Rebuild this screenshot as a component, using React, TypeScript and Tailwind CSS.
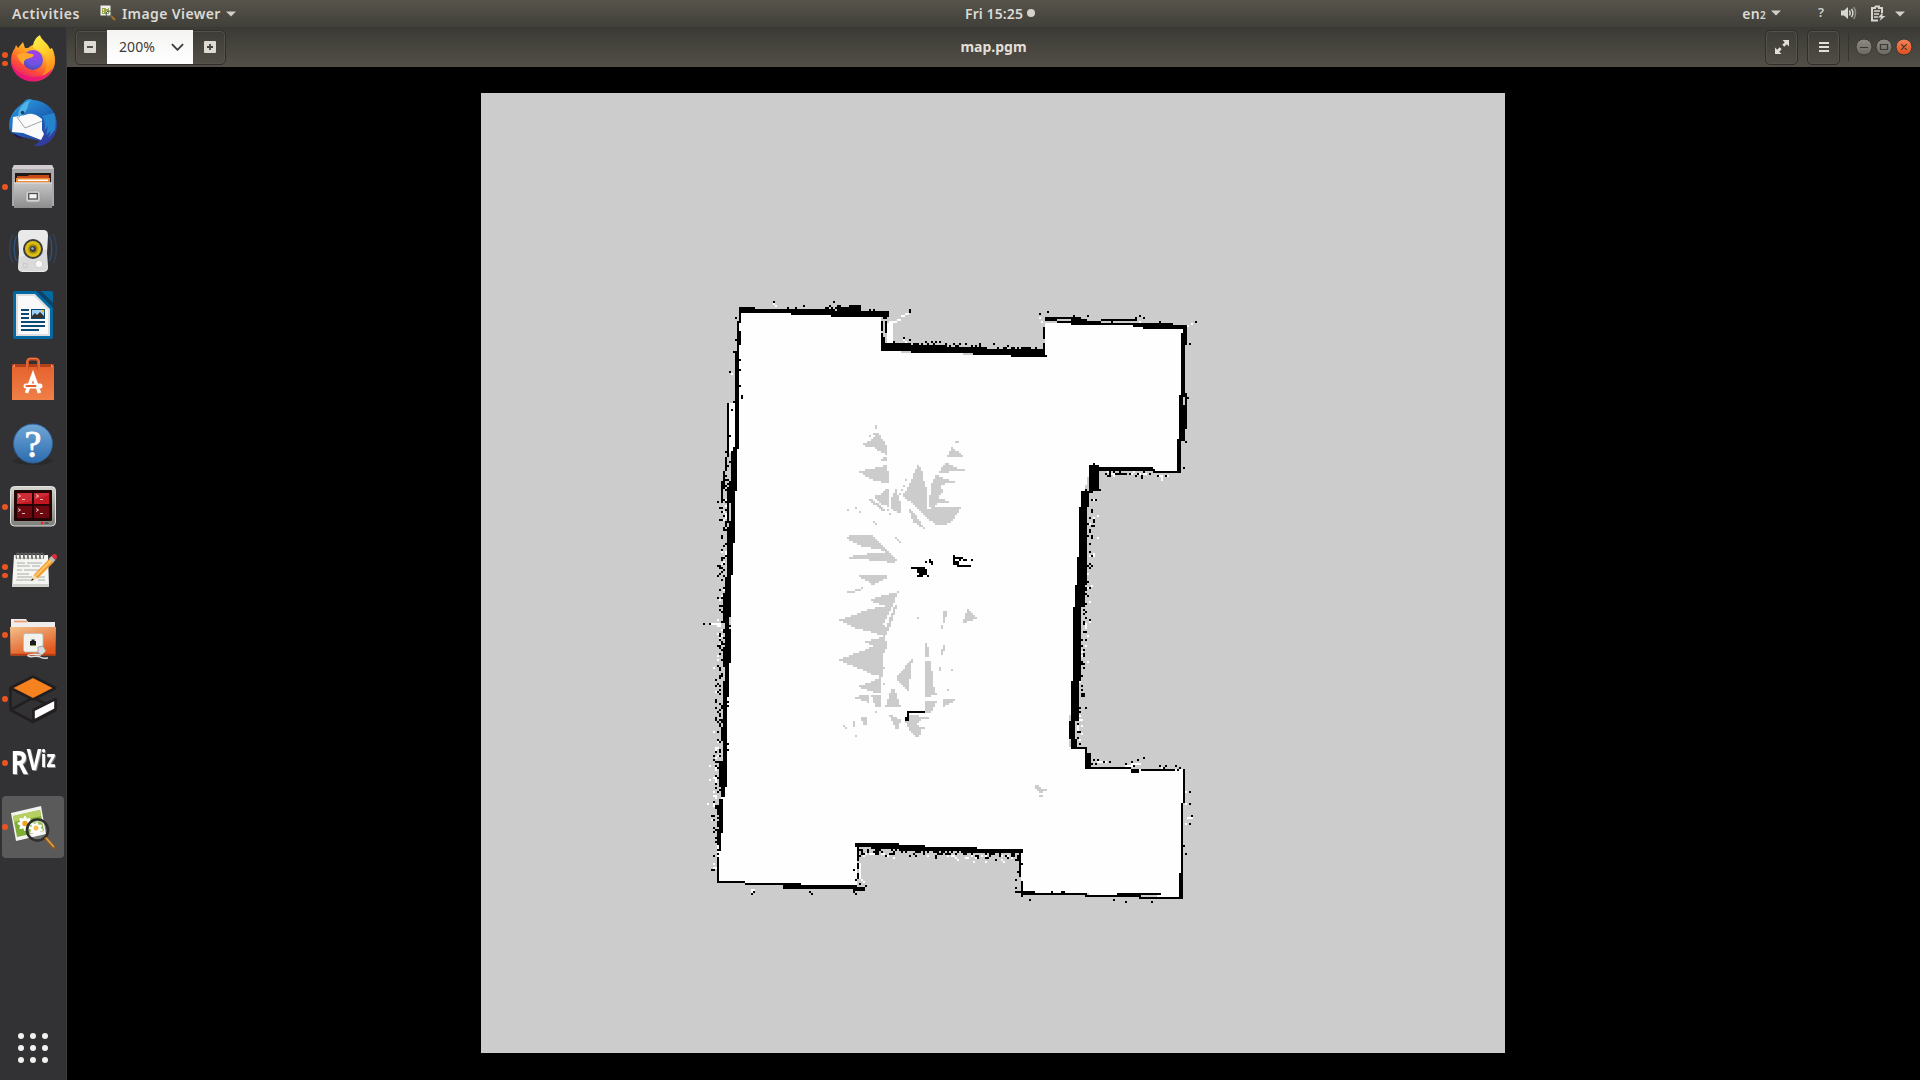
import React from "react";

/* ---------- occupancy map ---------- */

type Pt = [number, number];
const X0 = 481;
const Y0 = 93;

const pts = (s: string): Pt[] => s.trim().split(/\s+/).map((p) => p.split(",").map(Number) as Pt);

/** Scan-converts polygons to 2px map cells; coordinates are thirds of a pixel from (ox, oy). */
function fillCells(ox: number, oy: number, polys: string[]): string {
  let d = "";
  for (const s of polys) {
    const p = pts(s).map(([x, y]) => [(ox + x / 3 - X0) / 2, (oy + y / 3 - Y0) / 2] as Pt);
    const ys = p.map((q) => q[1]);
    for (let r = Math.floor(Math.min(...ys)); r <= Math.ceil(Math.max(...ys)); r++) {
      const c = r + 0.5;
      const xs: number[] = [];
      p.forEach((a, i) => {
        const b = p[(i + 1) % p.length];
        if (a[1] <= c !== b[1] <= c) xs.push(a[0] + ((c - a[1]) / (b[1] - a[1])) * (b[0] - a[0]));
      });
      xs.sort((m, n) => m - n);
      for (let i = 0; i + 1 < xs.length; i += 2) {
        const l = Math.round(xs[i]);
        const w = Math.round(xs[i + 1]) - l;
        if (w > 0) d += `M${l} ${r}h${w}v1h${-w}z`;
      }
    }
  }
  return d;
}

/** Rectangles "x,y,w,h" (or single cells "x,y" given by centre) snapped to map cells. */
function boxCells(ox: number, oy: number, list: string): string {
  return list
    .trim()
    .split(/\s+/)
    .map((b) => {
      const [x, y, w, h] = b.split(",").map(Number);
      if (w === undefined) {
        const cx = Math.floor((ox + x / 3 - X0) / 2);
        const cy = Math.floor((oy + y / 3 - Y0) / 2);
        return `M${cx} ${cy}h1v1h-1z`;
      }
      const cx = Math.round((ox + x / 3 - X0) / 2);
      const cy = Math.round((oy + y / 3 - Y0) / 2);
      const cw = Math.max(1, Math.round(w / 6));
      const ch = Math.max(1, Math.round(h / 6));
      return `M${cx} ${cy}h${cw}v${ch}h${-cw}z`;
    })
    .join("");
}

function speckle(seed: number, a: Pt, b: Pt, n: number, dx: number, dy: number): string {
  let s = seed;
  const rnd = () => {
    s = (s * 16807) % 2147483647;
    return s / 2147483647;
  };
  let d = "";
  for (let i = 0; i < n; i++) {
    const t = rnd();
    const k = rnd() * rnd();
    const x = Math.floor((a[0] + (b[0] - a[0]) * t + dx * k - X0) / 2);
    const y = Math.floor((a[1] + (b[1] - a[1]) * t + dy * k - Y0) / 2);
    d += `M${x} ${y}h1v1h-1z`;
  }
  return d;
}

const FREE = fillCells(0, 0, [
  "2217,939 2640,945 2645,1054 3132,1070 3132,966 3560,985 3540,1415 3270,1405 3255,1470 3212,2100 3206,2242 3256,2246 3256,2306 3549,2310 3540,2690 3063,2676 3063,2553 2568,2536 2568,2660 2152,2645 2152,2570 2190,1900 2205,1400",
]);

const FREE_BITS =
  boxCells(
    700,
    290,
    "78,340,24,150 566,92,12,66 560,98,14,60 576,90,12,8 588,84,12,8 600,76,12,8 612,70,14,8 222,42 228,48 1020,84 1024,96 1466,108 1476,100 98,252 1456,162 610,150 620,156 700,162 1310,90 1320,96 1222,546 1240,550 1300,546 1330,550"
  ) +
  boxCells(690, 480, "60,430,30,6 78,436,14,6 66,1160,10,6 70,1150,8,6 184,1226,12,10 78,955 96,240") +
  boxCells(1050, 460, "408,995 408,1031 408,1068,16,6 408,1091 160,26,150,8 120,190 104,490,8,20 82,790,8,24 240,906,30,6 222,914,30,6 330,918,12,6 140,905,30,6") +
  boxCells(0, 0, "2576,2590,6,50 2582,2636,8,8 2590,2644,8,8") +
  speckle(71, [1092, 500], [1076, 740], 30, 12, 0) +
  speckle(19, [728, 500], [714, 840], 60, -8, 0) +
  speckle(41, [860, 853], [1016, 856], 40, 0, 8) +
  speckle(61, [1090, 472], [1170, 476], 14, 0, 5);

const WALLS =
  // upper edge and right arm
  boxCells(
    700,
    290,
    `118,52,46,16 160,58,120,10 275,58,130,16 376,52,12,8 412,46,10,30 420,52,60,24 446,46,36,10 395,60,170,16 440,72,112,8 505,60,60,18
    550,72,12,14 545,92,6,30 545,128,6,30 556,92,6,34 545,140,10,44 556,160,50,24 600,160,30,24 630,164,60,24 660,166,70,22 700,170,60,18 750,168,50,20 800,172,60,20 820,176,110,18 920,178,116,20 935,190,100,12 1030,196,10,6
    1030,108,6,36 1030,156,6,24 1032,82,6,14 1040,82,30,14 1070,80,70,6 1070,92,70,6 1110,84,50,18 1140,90,60,12 1200,86,110,6 1200,98,136,8 1230,90,6,14 1300,100,60,12 1330,106,130,10 1345,100,70,8 1448,114,12,46
    1444,130,10,190 1438,315,10,100 1450,345,10,70 1456,310,4,40 1456,350,4,30 1434,410,16,40 1432,445,14,100 1360,540,78,8 1190,532,170,6 1172,522,10,78 1180,530,16,70
    222,36 312,46 402,36 262,54 288,54 630,62 630,68 1020,70 1044,66 1122,78 1164,78 1308,84 1330,84 1488,96 1470,162 612,144 630,150 696,156 708,156 720,156 740,162 800,162 882,162 924,168 955,174 975,174 990,172 1008,172 1464,322 1458,402 1458,456 1380,96 1318,76 568,168 584,156 762,160
    118,68,6,30 112,90,8,120 118,120,6,40 106,180,10,150 118,210 118,240 118,290 120,315,6,10 106,84 104,186 106,150 90,246 100,336 112,325,6,100 106,330,6,150 102,360,12,116 100,470,10,130 94,480,8,120 78,340,4,160 72,500,6,40 68,545,6,55 84,378 96,360 90,440 84,456 78,484 84,500 88,516 82,530 78,555 84,570 78,585`
  ) +
  // left edge
  boxCells(
    690,
    480,
    `115,0,18,66 108,20,8,110 120,66,4,120 129,60,5,128 115,120,8,70 120,134,12,8 108,140,10,150 112,170,4,120 123,185,4,100 112,268,14,22 104,290,18,120 98,340,10,90 104,405,14,40 104,445,18,100 98,500,10,60 104,545,12,110 98,600,6,60 96,650,14,270 90,740,8,40 88,840,10,80 92,918,12,30 86,955,12,100 80,975,8,30 80,1050,12,40 88,1090,4,24 82,1136,4,72 82,1204,82,5 162,1208,60,7 180,1211,150,8 280,1218,50,6
    90,0,4,64 86,66 92,84 98,98 104,110 90,120 100,150 96,166 102,200 98,212 96,236 84,258 92,260 90,280 86,290 98,300 90,330 96,352 40,432 60,432 118,436 92,470 96,494 90,520 96,540 84,560 78,600 84,614 80,618 90,632 78,665 86,696 80,714 90,730 114,664 114,678 114,790 114,808 80,815 72,828 78,846 78,860 86,892 72,965 80,975 72,1005 72,1020 76,1050 72,1126 84,1124 66,1170 72,1170 190,1236 184,1242`
  ) +
  // right recess and lower right arm
  boxCells(
    1050,
    460,
    `118,16,28,70 128,10,6,10 146,24,170,6 190,28,120,6 310,30,80,8 384,0,8,32 94,92,26,50 118,70,14,30 88,142,26,150 82,290,30,85 76,375,28,66 70,440,26,222 64,662,22,120 58,780,20,55 60,835,20,25 62,858,48,8 102,862,6,64 108,880,10,44 102,920,140,6 240,924,24,10 275,928,100,5 384,928 392,922 400,928,5,104 395,1030,8,105 394,1135,5,110 388,1240,10,75 0,1300,110,5 105,1304,170,8 268,1308,118,8 200,1300,130,5
    108,90 150,90 138,120 126,122 114,112 126,158 120,176 114,190 126,198 132,198 120,214 114,230 126,234 118,250 120,275 126,288 120,322 126,318 120,384 106,400 106,432 108,455 108,472 102,486 108,516 96,540 108,542 102,582 102,622 96,646 96,678 102,708 90,742 108,744 84,818 90,854 120,880 132,900 144,898 126,912 138,914 162,906 178,906 228,912 246,904 264,900 282,894 252,916 330,918 348,918 342,924 420,996 420,1032 426,1068 420,1092 402,1158 408,1182 192,1320 228,1326 306,1326 8,1296 36,1296 42,1296 400,22 160,30 174,46 198,40 210,36 240,40 264,42 258,48 282,34 300,40 324,46 348,48 380,920`
  ) +
  // lower recess
  boxCells(
    0,
    0,
    `2564,2528,130,12 2568,2532,6,50 2610,2534,160,14 2700,2538,160,12 2790,2542,140,14 2880,2546,186,12 3058,2550,8,80 2568,2620,6,20 3060,2640,4,36 2350,2652,130,12 2460,2656,110,12 2560,2658,38,10 2568,2588,6,16
    3042,2670,60,6 3060,2676,100,8 2580,2570 2574,2560 2574,2596 2562,2612 2590,2560 2570,2640 2580,2652 2600,2660 3050,2640 3054,2616 3066,2590 3060,2600 3054,2570 3046,2666 3066,2690 3090,2700 2430,2674 2436,2680 2562,2674 2568,2680`
  ) +
  speckle(7, [728, 480], [718, 860], 120, -8, 0) +
  speckle(11, [860, 849], [1020, 854], 110, 0, 8) +
  speckle(23, [1092, 500], [1076, 740], 36, 8, 0) +
  speckle(31, [882, 344], [1042, 350], 40, 0, -5) +
  speckle(43, [830, 308], [886, 312], 14, 0, -4) +
  speckle(53, [1092, 472], [1150, 474], 20, 0, 5);

const UNKNOWN =
  fillCells(820, 410, [
    "180,76 202,112 202,134 180,124 160,112 134,108 130,100 150,90 165,78",
    "178,148 202,140 202,158 190,152",
    "202,164 208,218 180,216 150,206 130,194 110,184 150,178 180,170",
    "208,234 208,292 188,284 172,270 158,260 186,250 200,238",
    "228,236 236,258 242,276 244,314 226,304 210,290 214,262",
    "296,164 304,176 312,212 320,236 324,296 350,290 424,290 414,310 392,338 370,346 346,344 320,322 286,290 248,256 264,232 282,190",
    "396,110 410,122 422,128 430,140 382,140",
    "380,158 412,176 436,180 400,184 356,190 364,172",
    "348,194 370,204 404,216 376,222 356,230 374,242 362,250 358,264 386,276 354,280 336,292 326,290 334,224",
    "262,286 272,300 290,318 306,346 320,360 300,350 278,334",
    "142,268 158,268 200,304 190,304",
    "76,382 94,376 156,376 190,408 232,450 218,460 190,454 86,444 110,434 200,428 180,418 120,408",
    "116,496 202,496 180,516 140,516",
    "212,374 230,384 248,402 236,398",
  ]) +
  boxCells(
    820,
    410,
    "164,44,6,12 160,70,16,5 148,76,8,5 404,93,12,6 256,212 252,226 246,238 238,252 84,300 108,294 114,300,8,5 162,336 166,342 212,312 206,300"
  ) +
  fillCells(820, 570, [
    "116,15 202,15 200,24 158,44 140,32",
    "80,66 96,62 134,50 128,58 100,68",
    "236,64 216,110 188,166 200,170 224,106 232,106 212,164 196,200 160,188 110,176 80,162 56,150 90,140 140,120 192,108 160,96 148,88 190,76",
    "194,198 200,232 190,254 186,320 160,314 130,300 80,282 56,270 100,252 160,230 136,216",
    "186,286 194,290 182,330 186,368 160,366 110,350 140,340 176,326",
    "106,384 120,374 146,374 146,400 130,392",
    "154,374 184,374 184,412 166,410",
    "218,350 230,374 242,410 196,410 206,382",
    "278,262 272,310 266,362 250,352 226,328 244,304",
    "316,220 322,220 328,260 316,260",
    "314,272 332,272 338,320 344,366 350,374 316,382",
    "316,392 350,392 346,408 332,428 316,428",
    "368,386 406,388 392,400 370,412",
    "442,116 450,122 470,144 456,152 430,158 432,146",
    "208,436 218,436 242,448 236,476 226,474",
    "262,436 326,440 324,448 300,450 292,462 304,480 300,494 290,502 272,484 256,458",
    "640,644 656,646 668,658 682,660 664,670 650,660",
    "122,440 140,440 140,466 130,462",
    "370,122 380,124 376,154 370,158",
    "364,240 372,226 374,236 370,254 364,256",
  ]) +
  boxCells(
    820,
    570,
    "363,164,5,12 357,290,5,12 396,300 384,360 294,144 98,454,5,20 72,466 78,472 108,498 168,426 304,468,10,5 656,676,12,5 200,214 190,344"
  );

const OBSTACLES =
  boxCells(820, 410, "274,470,44,6 290,474,28,12 296,486,20,8 290,494,20,6 312,480,8,12 324,498 318,456 328,448,6,14 334,454,5,10 398,436,6,30 404,440,22,8 404,452,10,14 412,462,24,6 430,448,14,5 434,466,18,5 457,450 420,450") +
  boxCells(820, 570, "262,422,54,5 260,424,8,24 256,440,10,12");

function OccupancyMap() {
  return (
    <svg viewBox="0 0 512 480" className="block h-[960px] w-[1024px] bg-[#cccccc]" shapeRendering="crispEdges">
      <path d={FREE} fill="#fefefe" />
      <path d={FREE_BITS} fill="#fefefe" />
      <path d={UNKNOWN} fill="#cccccc" />
      <path d={WALLS} fill="#000" />
      <path d={OBSTACLES} fill="#000" />
    </svg>
  );
}

/* ---------- dock icons ---------- */

const Firefox = () => (
  <>
    <defs>
      <linearGradient id="ffBody" x1="0.8" y1="0.1" x2="0.3" y2="1">
        <stop offset="0" stopColor="#ffde3a" />
        <stop offset=".35" stopColor="#ff9a1f" />
        <stop offset=".65" stopColor="#ff5136" />
        <stop offset="1" stopColor="#e3127c" />
      </linearGradient>
      <radialGradient id="ffGlobe" cx=".6" cy=".2" r=".9">
        <stop offset="0" stopColor="#a53cf0" />
        <stop offset=".6" stopColor="#6a55e0" />
        <stop offset="1" stopColor="#4a3fa8" />
      </radialGradient>
      <linearGradient id="ffFlame" x1="0" y1="0" x2=".4" y2="1">
        <stop offset="0" stopColor="#fff44f" />
        <stop offset=".5" stopColor="#ffd22e" />
        <stop offset="1" stopColor="#ff8a1c" />
      </linearGradient>
    </defs>
    <path d="M11 34c0-5 1-9 4-13l1-3 2 3 5-6 2 6 3 0c4-3 7-4 9-5 4 2 9 6 13 6 3 3 5 7 5 12a22 20.5 0 0 1-44 0z" fill="url(#ffBody)" />
    <path d="M33 20c0-5 3-10 7-12 1 5 8 8 10 14l2-1c4 7 4 18-2 24-3 3-6 4-9 5 6-6 8-16 3-22-3-4-8-5-11-8z" fill="url(#ffFlame)" />
    <circle cx="33" cy="33" r="10" fill="url(#ffGlobe)" />
    <path d="M17 28c5-3 10-2 15-1 3 0 2 3-2 4-5 1-7 3-6 7-4-3-6-6-7-10z" fill="#ffa72b" />
    <path d="M11 34c3 9 9 15 22 16 9 0 16-4 20-9-3 8-10 13-20 13-13 0-21-9-22-20z" fill="#e8127d" opacity=".75" />
  </>
);

const Thunderbird = () => (
  <>
    <defs>
      <linearGradient id="tbBody" x1=".2" y1="0" x2=".8" y2="1">
        <stop offset="0" stopColor="#2d9be0" />
        <stop offset=".5" stopColor="#1b62b5" />
        <stop offset="1" stopColor="#37339b" />
      </linearGradient>
    </defs>
    <path d="M9 35c0-11 7-18 14-23 3-4 6-5 10-3 14 1 24 11 24 25 0 11-8 20-17 21l-6 0 6-5-22-5C12 43 9 40 9 35z" fill="url(#tbBody)" />
    <path d="M13 26l12-2c7-3 12 0 17 4l0 11 2 4-3 6-18-7-11-1z" fill="#fafafa" />
    <path d="M17 26l8 11 17-7" fill="none" stroke="#9a9a9a" strokeWidth=".9" />
    <path d="M18 24c1-8 6-13 13-15-4 4-2 8-6 12-2 2-4 2-6 6z" fill="#4fb5e8" />
    <path d="M42 25c3 4 4 10 2 15l4-5-2 9 5-4-3 7 7-8c1-6 1-12-1-17z" fill="#2583cc" />
    <path d="M13 42l10 5c-4 1-8-1-10-5z" fill="#2a1054" />
    <circle cx="22.5" cy="21.5" r="1.7" fill="#263c50" />
  </>
);

const Files = () => (
  <>
    <defs>
      <linearGradient id="fiFront" x1="0" y1="0" x2="0" y2="1">
        <stop offset="0" stopColor="#c6c6c6" />
        <stop offset="1" stopColor="#8d8d8d" />
      </linearGradient>
    </defs>
    <path d="M14 10h38l2 4v37H12V14z" fill="#a9a9a9" />
    <path d="M14 10h38l2 4H12z" fill="#d2ccd0" />
    <rect x="15" y="18" width="36" height="12" fill="#1d1a19" />
    <path d="M17 21h11l1-1h20v8H17z" fill="#c84a16" />
    <path d="M16 23h34v6H16z" fill="#f08a35" />
    <path d="M18 24.5h30v1.500H18z" fill="#fff" />
    <path d="M14 27.500h38V53H14z" fill="url(#fiFront)" />
    <path d="M14 27.500h38v1H14z" fill="#dedede" />
    <rect x="26" y="36" width="14" height="11" rx="2.5" fill="#d4d4d4" stroke="#a1a1a1" strokeWidth=".7" />
    <rect x="28.7" y="38.5" width="8.6" height="5.5" fill="#f4f4f4" stroke="#505050" strokeWidth="1.3" />
  </>
);

const Rhythmbox = () => (
  <>
    <g fill="none" stroke="#31527e" strokeWidth="1.4">
      <path d="M13 15c-4.500 9-4.500 21 0 29" opacity=".55" />
      <path d="M16.500 17c-3 7-3 18 0 25" />
      <path d="M53 15c4.500 9 4.500 21 0 29" opacity=".55" />
      <path d="M49.500 17c3 7 3 18 0 25" />
    </g>
    <path d="M23 11h20c4 0 5 2 5 6l-1 17 1 14c0 4-2 5-6 5H24c-4 0-6-1-6-5l1-14-1-17c0-4 1-6 5-6z" fill="#e9e9e9" />
    <path d="M20 38l27-8v18c0 3-1 4-4 4H23c-3 0-4-1-4-4z" fill="#d3d3d3" opacity=".7" />
    <circle cx="33" cy="30" r="10" fill="#3c3c3c" />
    <circle cx="33" cy="30" r="8" fill="#d9bd12" />
    <circle cx="33" cy="30" r="4.800" fill="#a68a0a" />
    <circle cx="33" cy="30" r="3" fill="#3a3d45" />
    <circle cx="32.500" cy="29.500" r="1.200" fill="#a9b0ba" />
    <circle cx="39" cy="45" r="3.800" fill="#f8f8f8" stroke="#bdbdbd" strokeWidth=".6" />
    <rect x="23.500" y="44.500" width="3.500" height="4" fill="none" stroke="#c8c8c8" strokeWidth=".8" />
  </>
);

const Writer = () => (
  <>
    <path d="M15 8h23l15 15v31a2 2 0 0 1-2 2H15a2 2 0 0 1-2-2V10a2 2 0 0 1 2-2z" fill="#0369a3" />
    <path d="M41 8h10a2 2 0 0 1 2 2v10z" fill="#0369a3" />
    <path d="M36 8h4l13 13v4z" fill="#08456e" />
    <path d="M16 11h19l15 15v27H16z" fill="#dedede" />
    <path d="M18 13h16l14 14v24H18z" fill="#fafafa" />
    <path d="M21 27h8M21 31h8M21 35h8M21 39h24M21 43h24M21 47h18" stroke="#0b4a73" strokeWidth="2" />
    <rect x="31.500" y="26.500" width="13" height="9" fill="#9ed0f5" stroke="#0b4a73" />
    <path d="M32 35v-2l3-3 2 2 3-3 4 4v2z" fill="#333" />
    <circle cx="43" cy="28" r="1.300" fill="#e7ba3a" />
  </>
);

const Software = () => (
  <>
    <defs>
      <linearGradient id="swBag" x1="0" y1="0" x2="0" y2="1">
        <stop offset="0" stopColor="#e5602c" />
        <stop offset="1" stopColor="#f08048" />
      </linearGradient>
    </defs>
    <path d="M12 17h42v36H12z" fill="url(#swBag)" />
    <path d="M12 17h42v3H12z" fill="#b2401a" />
    <path d="M12 20l3-3v3zM54 20l-3-3v3z" fill="#f39062" />
    <path d="M27.500 23v-8c0-2 1-3 3-3h5c2 0 3 1 3 3v8" fill="none" stroke="#cf4f20" strokeWidth="3" />
    <path d="M27 23v-8c0-2 1-3.500 3.500-3.500h5c2 0 3.500 1.500 3.500 3.500v8" fill="none" stroke="#ee8358" strokeWidth="1" />
    <path d="M26.500 46l6.500-18 6.500 18" fill="none" stroke="#fff" strokeWidth="3.600" />
    <rect x="23.500" y="36.500" width="19" height="5" rx="2.500" fill="#fff" />
    <rect x="25.500" y="38" width="11" height="2" rx="1" fill="#e2602c" />
  </>
);

const Help = () => (
  <>
    <defs>
      <linearGradient id="hpBall" x1="0" y1="0" x2="0" y2="1">
        <stop offset="0" stopColor="#6fa6d6" />
        <stop offset="1" stopColor="#2c6cae" />
      </linearGradient>
    </defs>
    <ellipse cx="33" cy="50" rx="20" ry="4" fill="#2a2a2b" />
    <circle cx="33" cy="32.500" r="19.500" fill="url(#hpBall)" stroke="#2e5f96" strokeWidth="1" />
    <text x="33" y="46" textAnchor="middle" fontFamily="Liberation Serif, serif" fontWeight="400" fontSize="38" fill="#fff" stroke="#fff" strokeWidth=".8">
      ?
    </text>
  </>
);

const Terminals = () => (
  <>
    <defs>
      <linearGradient id="tmFrame" x1="0" y1="0" x2="0" y2="1">
        <stop offset="0" stopColor="#d3d5cf" />
        <stop offset="1" stopColor="#7d7f79" />
      </linearGradient>
    </defs>
    <rect x="10.500" y="11.500" width="45" height="39.500" rx="4" fill="url(#tmFrame)" stroke="#e2e3df" strokeWidth="1" />
    <rect x="14" y="15" width="38" height="31" rx="1" fill="#240404" />
    <path d="M17 18h15v11H17zM34 18h15v11H34z" fill="#bf1620" />
    <path d="M17 31h15v12H17zM34 31h15v12H34z" fill="#6e0810" />
    <path d="M17 18h15v8l-15 3z" fill="#e04550" opacity=".45" />
    <path d="M34 18h15v2l-15 5z" fill="#e04550" opacity=".45" />
    <path d="M18 19.500l2.500 1.500-2.500 1.500M22 24.500h3M36 19.500l2.500 1.500-2.500 1.500M40 24.500h3M18 33.500l2.500 1.500-2.500 1.500M22 38.500h3M36 33.500l2.500 1.500-2.500 1.500M40 38.500h3" fill="none" stroke="#f0d4d4" strokeWidth=".9" />
    <circle cx="42" cy="48" r="1.300" fill="#f02020" />
    <rect x="44.500" y="47" width="4" height="2" fill="#5d5f5a" />
  </>
);

const Notes = () => (
  <>
    <path d="M14 16h34l1 30v2H12z" fill="#f5f5f2" />
    <path d="M12.500 45h36.500v3H12z" fill="#cfd1cb" />
    <path d="M17 24h8m2 0h15M17 27h13m2 0h8M17 31h5m2 0h16M17 35h12M17 38h15M16 41h17M38 38h7M38 41h7" stroke="#a9a9a9" strokeWidth="1" />
    {[17, 21, 25, 29, 33, 37, 41].map((x) => (
      <path key={x} d={`M${x} 20c-1.500-2-1-6 1-6s2 4 1 6`} fill="none" stroke="#6b6b6b" strokeWidth="1.100" />
    ))}
    <path d="M31 42l3.500-7L50 19l4 4-16 16z" fill="#f29a2c" />
    <path d="M35 36L51 20l1.500 1.500L36.500 37.500z" fill="#ffc56b" />
    <path d="M31 42l3-6 4 3.500z" fill="#f4dcae" />
    <path d="M31 42l1.200-2.500 1.600 1.200z" fill="#222" />
    <path d="M49 19.500l2.500-2.500 4 4-2.500 2.500z" fill="#b9bcb8" />
    <path d="M51.500 17c1.500-2 3-2.500 4.500-1.500s1.500 3.500-.5 5.500z" fill="#dc2e3a" />
  </>
);

const NetFolder = () => (
  <>
    <defs>
      <linearGradient id="nfBody" x1="0" y1="0" x2=".5" y2="1">
        <stop offset="0" stopColor="#f2c08c" />
        <stop offset="1" stopColor="#e2581e" />
      </linearGradient>
    </defs>
    <path d="M11 16h15l2 3h27v9H11z" fill="#f0eeec" />
    <path d="M14 18.500h13" stroke="#e8986a" strokeWidth="1.600" />
    <path d="M10 24h46l-.5 28.500h-45z" fill="url(#nfBody)" />
    <path d="M11 51.500h44" stroke="#c0390f" strokeWidth="1.500" />
    <rect x="23.500" y="30.500" width="19.500" height="18.500" rx="2" fill="#f1f1ee" stroke="#b8b8b4" strokeWidth=".7" />
    <path d="M30 42v-4h1.500v-1.500h3V38H36v4z" fill="#1c1c1c" />
    <path d="M30 42.500h6" stroke="#8f8f2a" strokeWidth="1" />
    <path d="M38 44l5-1 3 5-4 4-4-2z" fill="#d9d9d9" stroke="#8a8a8a" strokeWidth=".7" />
    <path d="M41 52c-4-1-14-1-13 1s9-1 12 1 5 1 8 1" fill="none" stroke="#dedede" strokeWidth="1.500" />
  </>
);

const Gazebo = () => (
  <>
    <path d="M10.500 21v22L33 55l22.500-12V32M10.500 43L33 30.500l15 7.500" fill="none" stroke="#231f20" strokeWidth="2.600" strokeLinejoin="round" />
    <path d="M33 9.500L55.500 21 33 32.500 10.500 21z" fill="#f5821f" stroke="#231f20" strokeWidth="2.600" strokeLinejoin="round" />
    <path d="M33.500 43L55.500 32v10.500L33.500 54z" fill="#fff" stroke="#231f20" strokeWidth="2.600" strokeLinejoin="round" />
  </>
);

const RViz = () => (
  <text
    fontFamily="Open Sans, sans-serif"
    fontWeight="700"
    fill="#fff"
    transform="scale(.8 1)"
    className="drop-shadow-[1px_1px_0_#8d8d8d]"
  >
    <tspan x="13" y="43" fontSize="33">R</tspan>
    <tspan x="33.500" y="39.500" fontSize="28">V</tspan>
    <tspan x="51" y="36.500" fontSize="23">iz</tspan>
  </text>
);

const Viewer = () => (
  <>
    <path d="M11 18l30-7 5 28-30 7z" fill="#f3f3f0" />
    <path d="M13 21l27-6 4 21-27 6z" fill="#7fae35" />
    <path d="M13 21l27-6 1 6-27 6z" fill="#b7cf62" />
    <g fill="#fff">
      {[0, 45, 90, 135].map((a) => (
        <ellipse key={a} cx="25" cy="28.500" rx="7.500" ry="2.400" transform={`rotate(${a} 25 28.500)`} />
      ))}
      {[10, 55, 100, 145].map((a) => (
        <ellipse key={a} cx="36" cy="34" rx="7" ry="2.400" transform={`rotate(${a} 36 34)`} />
      ))}
    </g>
    <circle cx="25" cy="28.500" r="2.700" fill="#f0a21c" />
    <circle cx="36" cy="33" r="2.500" fill="#f0b82c" />
    <circle cx="37.500" cy="35" r="10.500" fill="#fff" fillOpacity=".15" stroke="#2e2e2c" strokeWidth="2.600" />
    <path d="M31 30c3-4 8-5 12-2" stroke="#fff" strokeOpacity=".5" fill="none" strokeWidth="1.200" />
    <path d="M46 43.500l8 9" stroke="#8d5a1c" strokeWidth="3.400" strokeLinecap="round" />
    <path d="M46.500 43.500l7 8" stroke="#e0a548" strokeWidth="1.500" strokeLinecap="round" />
  </>
);

const DOCK: { name: string; icon: () => React.JSX.Element; windows: number; active?: boolean }[] = [
  { name: "Firefox", icon: Firefox, windows: 2 },
  { name: "Thunderbird", icon: Thunderbird, windows: 0 },
  { name: "Files", icon: Files, windows: 1 },
  { name: "Rhythmbox", icon: Rhythmbox, windows: 0 },
  { name: "Writer", icon: Writer, windows: 0 },
  { name: "Software", icon: Software, windows: 0 },
  { name: "Help", icon: Help, windows: 0 },
  { name: "Terminator", icon: Terminals, windows: 1 },
  { name: "Notes", icon: Notes, windows: 2 },
  { name: "Network", icon: NetFolder, windows: 1 },
  { name: "Gazebo", icon: Gazebo, windows: 1 },
  { name: "RViz", icon: RViz, windows: 1 },
  { name: "Image Viewer", icon: Viewer, windows: 1, active: true },
];

function Dock() {
  return (
    <nav className="flex w-[67px] shrink-0 flex-col justify-between border-r border-[#3d3d3f] bg-[#323234]">
      <ul className="flex flex-col">
        {DOCK.map(({ name, icon: Icon, windows, active }) => (
          <li key={name} aria-label={name} className="relative h-16 w-[66px]">
            {active && <div className="absolute top-[1px] left-[2px] h-[62px] w-[62px] rounded bg-[#5a5a5b]" />}
            <svg viewBox="0 0 66 64" className="relative block h-16 w-[66px]">
              <Icon />
            </svg>
            <div className="absolute inset-y-0 left-[2px] flex flex-col items-center justify-center gap-[3px]">
              {Array.from({ length: windows }, (_, i) => (
                <span key={i} className="block size-[5.500px] rounded-full bg-[#e95420]" />
              ))}
            </div>
          </li>
        ))}
      </ul>
      <div className="mb-[17px] ml-[18px] grid w-[30px] grid-cols-3 gap-[6px]">
        {Array.from({ length: 9 }, (_, i) => (
          <span key={i} className="size-[6px] rounded-full bg-[#f2f1ef]" />
        ))}
      </div>
    </nav>
  );
}

/* ---------- bars ---------- */

const Caret = () => (
  <svg viewBox="0 0 10 6" className="h-[6px] w-[10px]">
    <path d="M0 .5h10L5 5.500z" fill="#d0cfca" />
  </svg>
);

function TopBar() {
  return (
    <header className="flex h-[27px] items-center bg-linear-to-b from-[#57544b] to-[#403f39] pb-px text-[14px] font-semibold text-[#dcdad5]">
      <div className="flex flex-1 items-center">
        <span className="ml-[12px] w-[68px] whitespace-nowrap tracking-[0.55px]">Activities</span>
        <svg viewBox="0 0 16 16" className="ml-[20px] size-4">
          <path d="M.5.500h10v10H.5z" fill="#efefec" />
          <path d="M2 3h7v6H2z" fill="#8fae54" />
          <path d="M3 4h2v2H3zM6 6h2v2H6zM6 3h2v1H6zM3 7h1v1H3z" fill="#fff" />
          <circle cx="4.500" cy="5" r="1" fill="#d58a1b" />
          <circle cx="9" cy="9" r="3" fill="none" stroke="#5a5a58" strokeWidth="1" />
          <path d="M11.500 11.500l3.500 3.500" stroke="#a8742c" strokeWidth="2" />
        </svg>
        <span className="ml-[6px] w-[99px] whitespace-nowrap tracking-[0.4px]">Image Viewer</span>
        <span className="ml-[5px] pt-px">
          <Caret />
        </span>
      </div>
      <div className="mr-[-80px] flex items-center gap-[4px]">
        <span className="whitespace-nowrap tracking-[0.1px]">Fri 15:25</span>
        <span className="size-2 rounded-full bg-[#d3d2cd]" />
      </div>
      <div className="flex flex-1 items-center justify-end">
        <span className="mr-[5px] flex items-baseline tracking-[0.3px]">
          en<span className="text-[10px]">2</span>
        </span>
        <Caret />
        <span className="ml-[37px] w-[8px] text-[13px] text-[#d0cfca]">?</span>
        <svg viewBox="0 0 16 14" className="ml-[15px] h-[14px] w-4">
          <path d="M0 4.500h3L7 1v12L3 9.500H0z" fill="#d6d5d0" />
          <path d="M8.500 4.500q1.500 2.500 0 5M10.500 2.800q2.800 4.200 0 8.400" fill="none" stroke="#d6d5d0" strokeWidth="1.500" />
          <path d="M12.800 1q3.500 6 0 12" fill="none" stroke="#8b8981" strokeWidth="1.500" />
        </svg>
        <svg viewBox="0 0 15 17" className="ml-[14px] h-[17px] w-[15px]">
          <path d="M4 1.500h4V3h3v5M7 15.500H1V3h3V1.500" fill="none" stroke="#d6d5d0" strokeWidth="2" />
          <path d="M3 6h6M3 9h5M3 12h4" stroke="#d6d5d0" strokeWidth="1.400" />
          <path d="M11.500 7.500L7 12.500h3L8.500 16l6-5h-3z" fill="#d6d5d0" />
        </svg>
        <span className="mr-[15px] ml-[9px] pt-px">
          <Caret />
        </span>
      </div>
    </header>
  );
}

function WindowBar() {
  return (
    <header className="flex h-[40px] shrink-0 items-center bg-linear-to-b from-[#3b3a35] to-[#524f47]">
      <div className="flex flex-1 items-center">
        <div className="ml-[8px] flex h-[35px] w-[151px] items-center rounded-[5px] border border-[#2f2e2a] shadow-[0_0_0_1px_#54524a_inset]">
          <span className="flex w-[31px] shrink-0 justify-center pr-[3px]">
            <svg viewBox="0 0 12 12" className="size-3">
              <rect width="12" height="12" rx="1" fill="#dfdbd2" />
              <path d="M3 6h6" stroke="#45433c" strokeWidth="1.800" />
            </svg>
          </span>
          <span className="flex h-[34px] w-[86px] shrink-0 items-center justify-between bg-linear-to-b from-[#f4f4f3] to-[#fff] pr-[9px] pb-px pl-[12px] text-[14px] tracking-[0.1px] text-[#3c3c3c]">
            200%
            <svg viewBox="0 0 14 8" className="mt-px h-2 w-[13px]">
              <path d="M1 1l6 6 6-6" fill="none" stroke="#3c3c3c" strokeWidth="2" />
            </svg>
          </span>
          <span className="flex w-[32px] shrink-0 justify-center pl-[2px]">
            <svg viewBox="0 0 12 12" className="size-3">
              <rect width="12" height="12" rx="1" fill="#dfdbd2" />
              <path d="M3 6h6M6 3v6" stroke="#45433c" strokeWidth="1.800" />
            </svg>
          </span>
        </div>
      </div>
      <h1 className="pb-[2px] text-[14px] font-bold text-[#e3dfd7]">map.pgm</h1>
      <div className="flex flex-1 items-center justify-end">
        <span className="flex h-[35px] w-[33px] items-center justify-center rounded-[5px] border border-[#2f2e2a] shadow-[0_0_0_1px_#54524a_inset]">
          <svg viewBox="0 0 14 14" className="size-[14px]" fill="#e3dfd7">
            <path d="M7.500 0H14v6.500l-2.200-2.200-2.500 2.500-2-2 2.500-2.500zM6.500 14H0V7.500l2.200 2.200 2.500-2.500 2 2-2.500 2.500z" />
          </svg>
        </span>
        <span className="ml-[9px] flex h-[35px] w-[33px] items-center justify-center rounded-[5px] border border-[#2f2e2a] shadow-[0_0_0_1px_#54524a_inset]">
          <svg viewBox="0 0 10 10" className="size-[10px]">
            <path d="M0 1h10M0 5h10M0 9h10" stroke="#e3dfd7" strokeWidth="2" />
          </svg>
        </span>
        <span className="ml-[8px] h-7 w-px bg-[#35342f]" />
        <svg viewBox="0 0 58 18" className="mr-[7px] ml-[6px] h-[18px] w-[58px]">
          <defs>
            <linearGradient id="wbGray" x1="0" y1="0" x2="0" y2="1">
              <stop offset="0" stopColor="#8d8b84" />
              <stop offset="1" stopColor="#6a6861" />
            </linearGradient>
            <linearGradient id="wbClose" x1="0" y1="0" x2="0" y2="1">
              <stop offset="0" stopColor="#f4835c" />
              <stop offset="1" stopColor="#e04e1b" />
            </linearGradient>
          </defs>
          <circle cx="9" cy="9" r="8" fill="url(#wbGray)" stroke="#383731" />
          <circle cx="29" cy="9" r="8" fill="url(#wbGray)" stroke="#383731" />
          <circle cx="49" cy="9" r="8" fill="url(#wbClose)" stroke="#383731" />
          <path d="M5 9.500h8M25.500 6.500h7v5h-7zM46.200 6.200l5.600 5.600M51.800 6.200l-5.600 5.600" fill="none" stroke="#3a3933" strokeWidth="1.200" />
        </svg>
      </div>
    </header>
  );
}

export default function App() {
  return (
    <div className="flex h-[1080px] w-[1920px] flex-col overflow-hidden bg-black font-['Noto_Sans','Open_Sans',sans-serif] select-none">
      <TopBar />
      <div className="flex min-h-0 flex-1">
        <Dock />
        <main className="flex flex-1 flex-col">
          <WindowBar />
          <div className="flex flex-1 items-center justify-center bg-black pr-px pb-px">
            <OccupancyMap />
          </div>
        </main>
      </div>
    </div>
  );
}
